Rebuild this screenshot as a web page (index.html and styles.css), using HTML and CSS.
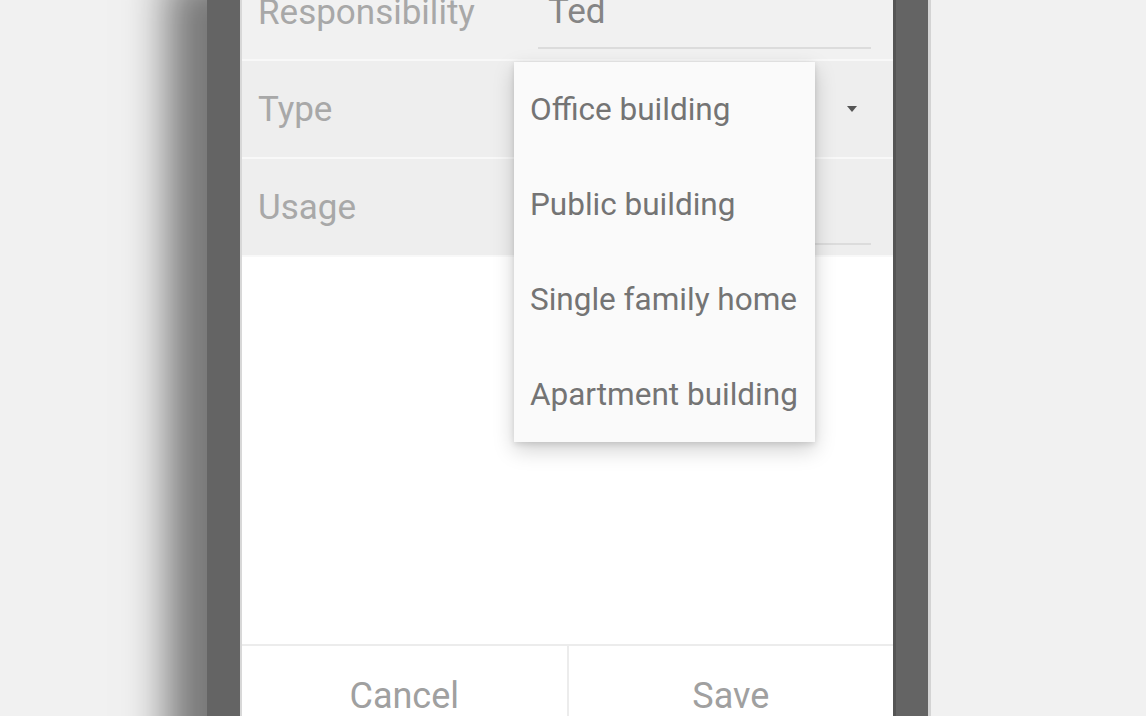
FILE: index.html
```html
<!DOCTYPE html>
<html>
<head>
    <title>Edit building</title>
    <link rel="stylesheet" href="styles.css">
</head>
<body>
    <div class="phone">
        <div class="screen">
            <div class="row top">
                <div class="label">Responsibility</div>
                <div class="field underline">Ted</div>
            </div>
            <div class="row">
                <div class="label">Type</div>
                <div class="field"><span class="arrow"></span></div>
            </div>
            <div class="row">
                <div class="label">Usage</div>
                <div class="field underline"></div>
            </div>
            <div class="spacer"></div>
            <div class="footer">
                <button>Cancel</button>
                <button>Save</button>
            </div>

            <div class="menu">
                <div class="item">Office building</div>
                <div class="item">Public building</div>
                <div class="item">Single family home</div>
                <div class="item">Apartment building</div>
            </div>
        </div>
    </div>
</body>
</html>
```

FILE: styles.css
```css
html, body {
    margin: 0;
    height: 100%;
    overflow: hidden;
}
body {
    background-color: #f1f1f1;
    font-family: Roboto, "Liberation Sans", sans-serif;
}
.phone {
    width: 656px;
    margin-left: 207px;
    margin-top: -35px;
    padding: 0 32px 0 33px;
    background-color: #646464;
    box-shadow: -50px 0 40px -10px rgba(0, 0, 0, 0.5);
    border-right: 3px solid #d4d4d4;
}
.screen {
    position: relative;
    display: flex;
    flex-direction: column;
    height: 860px;
    background-color: #fff;
    border-left: 2px solid #d8d8d8;
    border-right: 3px solid #555;
}
.row {
    display: flex;
    align-items: center;
    height: 96px;
    background-color: #eeeeee;
    border-bottom: 2px solid #f8f8f8;
}
.row.top {
    height: 94px;
    background-color: #f1f1f1;
}
.label {
    width: 280px;
    padding-left: 16px;
    font-size: 35px;
    color: #a8a8a8;
}
.field {
    position: relative;
    align-self: stretch;
    flex: 1;
    margin-right: 22px;
    display: flex;
    align-items: center;
    padding-left: 10px;
    font-size: 35px;
    color: #858585;
}
.field.underline {
    border-bottom: 2px solid #dcdcdc;
    margin-bottom: 10px;
    margin-top: 10px;
}
.arrow {
    position: absolute;
    right: 14px;
    top: 45px;
    border-left: 5px solid transparent;
    border-right: 5px solid transparent;
    border-top: 6px solid #555;
}
.spacer {
    flex: 0 0 387px;
}
.footer {
    display: flex;
    border-top: 2px solid #ececec;
}
.footer button {
    flex: 1;
    height: 100px;
    border: none;
    background: #fff;
    font-family: inherit;
    font-size: 36px;
    color: #a0a0a0;
}
.footer button + button {
    border-left: 2px solid #ececec;
}
.menu {
    position: absolute;
    left: 272px;
    top: 97px;
    width: 301px;
    background-color: #fafafa;
    box-shadow: 0 8px 20px rgba(0, 0, 0, 0.18), 0 2px 6px rgba(0, 0, 0, 0.12);
}
.item {
    height: 95px;
    display: flex;
    align-items: center;
    padding-left: 16px;
    font-size: 31.5px;
    color: #747474;
    white-space: nowrap;
}
```
